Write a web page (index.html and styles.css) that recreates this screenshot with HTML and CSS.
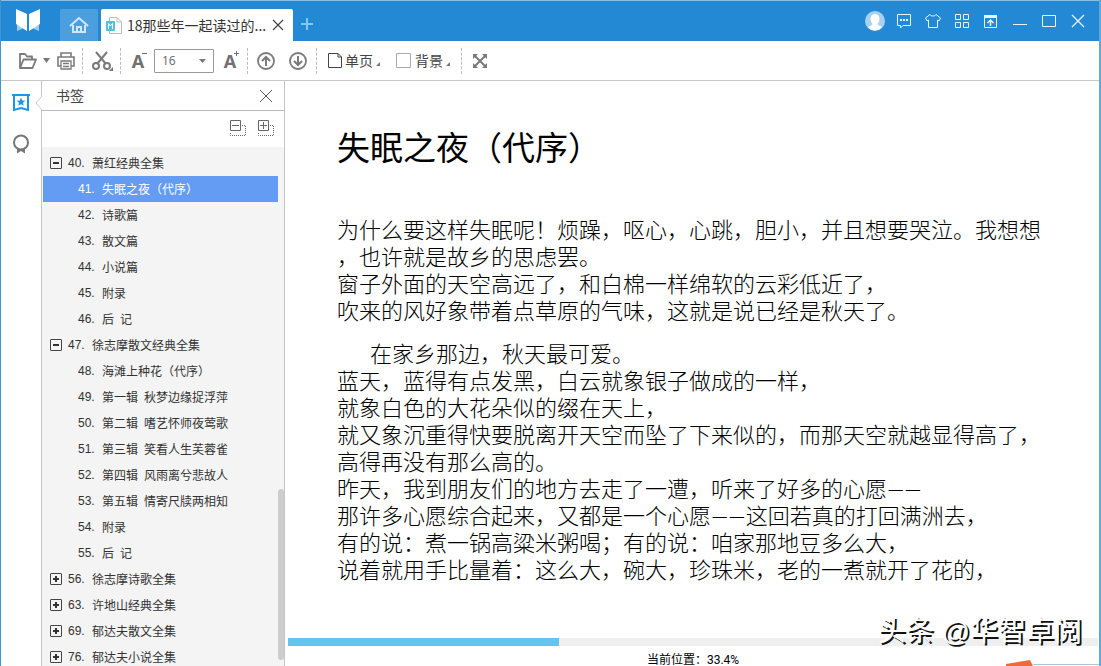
FILE: index.html
```html
<!DOCTYPE html>
<html lang="zh-CN">
<head>
<meta charset="utf-8">
<title>18那些年一起读过的...</title>
<link rel="stylesheet" href="styles.css">
</head>

<body>
<div class="window">

<!-- title bar -->
<header class="titlebar">
	<svg class="logo" width="24" height="24" viewBox="0 0 24 24">
		<path d="M1 13 V22 L10 18 Z M23 13 V22 L14 18 Z" fill="#9ccdf0"/>
		<path d="M0 0 L11 5 V22 L0 15 Z M24 0 L13 5 V22 L24 15 Z" fill="#fff"/>
	</svg>
	<button class="home" type="button" aria-label="主页">
		<svg width="20" height="18" viewBox="0 0 20 18" fill="none" stroke="#cfe8fb" stroke-width="2">
			<path d="M1 10 L10 2 L19 10"/>
			<path d="M4 9 V16 H16 V9"/>
			<path d="M8 16 V11 H12 V16"/>
		</svg>
	</button>
	<div class="tab">
		<svg width="16" height="17" viewBox="0 0 16 17">
			<path d="M3.500 .5 H11 L15.500 5 V16.500 H3.500 Z M11 .5 V5 H15.500" fill="#fff" stroke="#bbb"/>
			<rect x="0" y="4" width="9" height="10" rx="1" fill="#53c1dc"/>
			<path d="M2.500 12 V6.500 L4.500 9 L6.500 6.500 V12" fill="none" stroke="#fff"/>
		</svg>
		<span class="tabname">18那些年一起读过的...</span>
		<button class="tabclose" type="button" aria-label="关闭标签">
			<svg width="12" height="12" viewBox="0 0 12 12" stroke="#444" stroke-width="1.200"><path d="M1 1 L11 11 M11 1 L1 11"/></svg>
		</button>
	</div>
	<button class="newtab" type="button" aria-label="新标签">
		<svg width="12" height="12" viewBox="0 0 12 12" stroke="#86c6f2" stroke-width="2"><path d="M6 0 V12 M0 6 H12"/></svg>
	</button>
	<div class="controls">
		<button type="button" aria-label="用户">
			<svg width="20" height="20" viewBox="0 0 20 20">
				<circle cx="10" cy="10" r="10" fill="#a9d0ef"/>
				<path d="M10 3 C13 3 14.500 5 14.500 8 C14.500 10 13.500 12 12.500 13 C13 14.500 16 14.500 17 16.500 A9.500 9.500 0 0 1 3 16.500 C4 14.500 7 14.500 7.500 13 C6.500 12 5.500 10 5.500 8 C5.500 5 7 3 10 3 Z" fill="#fff"/>
			</svg>
		</button>
		<button type="button" aria-label="消息">
			<svg width="16" height="16" viewBox="0 0 16 16" fill="none" stroke="#e8f5ff">
				<path d="M1.500 1.500 H14.500 V12.500 H7 L4.500 15 V12.500 H1.500 Z"/>
				<path d="M4 7 H6 M7 7 H9 M10 7 H12" stroke-width="2"/>
			</svg>
		</button>
		<button type="button" aria-label="皮肤">
			<svg width="16" height="16" viewBox="0 0 16 16" fill="none" stroke="#e8f5ff">
				<path d="M5 1.500 C6 3.500 10 3.500 11 1.500 L15.500 5 L14 8 L12.500 7 V14.500 H3.500 V7 L2 8 L.5 5 Z"/>
			</svg>
		</button>
		<button type="button" aria-label="应用">
			<svg width="14" height="14" viewBox="0 0 14 14" fill="none" stroke="#e8f5ff">
				<path d="M.5 .5 H5.500 V5.500 H.5 Z M8.500 .5 H13.500 V5.500 H8.500 Z M.5 8.500 H5.500 V13.500 H.5 Z M8.500 8.500 H13.500 V13.500 H8.500 Z"/>
			</svg>
		</button>
		<button type="button" aria-label="置顶">
			<svg width="14" height="14" viewBox="0 0 14 14" fill="none" stroke="#e8f5ff">
				<path d="M.5 1.500 H12.500 V13.500 H.5 Z"/>
				<path d="M0 2.500 H13" stroke-width="3"/>
				<path d="M6.500 12 V6 M3.500 9 L6.500 6 L9.500 9" stroke-width="1.500"/>
			</svg>
		</button>
		<button type="button" aria-label="最小化">
			<svg width="14" height="14" viewBox="0 0 14 14" stroke="#e8f5ff"><path d="M0 10.500 H14"/></svg>
		</button>
		<button type="button" aria-label="最大化">
			<svg width="14" height="14" viewBox="0 0 14 14" fill="none" stroke="#e8f5ff"><path d="M.5 1.500 H13.500 V12.500 H.5 Z"/></svg>
		</button>
		<button type="button" aria-label="关闭">
			<svg width="14" height="14" viewBox="0 0 14 14" stroke="#e8f5ff" stroke-width="1.300"><path d="M1 1 L13 13 M13 1 L1 13"/></svg>
		</button>
	</div>
</header>

<!-- toolbar -->
<div class="toolbar">
	<button class="open" type="button" aria-label="打开">
		<svg width="20" height="18" viewBox="0 0 20 18" fill="none" stroke="#7a7a7a" stroke-width="1.800" stroke-linejoin="round">
			<path d="M2 16 V2 H7 L9 4.500 H14 V7"/>
			<path d="M2 16 L5.500 7.500 H18 L14.500 16 Z"/>
		</svg>
		<svg width="7" height="5" viewBox="0 0 7 5" fill="#777"><path d="M0 0 H7 L3.500 5 Z"/></svg>
	</button>
	<button class="print" type="button" aria-label="打印">
		<svg width="18" height="18" viewBox="0 0 18 18" fill="none" stroke="#7a7a7a" stroke-width="1.600">
			<path d="M4 5 V1 H14 V5"/>
			<path d="M4 14 H1 V5 H17 V14 H14"/>
			<path d="M4 9 H14 V17 H4 Z M6 11.500 H12 M6 14.500 H12" stroke-width="1.300"/>
		</svg>
	</button>
	<span class="sep"></span>
	<button class="cut" type="button" aria-label="剪切">
		<svg width="22" height="20" viewBox="0 0 22 20" fill="none" stroke="#7a7a7a" stroke-width="2">
			<path d="M4 1 L14 13 M15 1 L5 13"/>
			<circle cx="4" cy="15" r="3"/>
			<circle cx="15" cy="15" r="3"/>
			<path d="M21 16 V20 H17 Z" fill="#777" stroke="none"/>
		</svg>
	</button>
	<span class="sep"></span>
	<button class="size" type="button" aria-label="缩小字号">
		<span class="letter">A<svg class="sign" width="5" height="5" viewBox="0 0 5 5" stroke="#707070"><path d="M0 2.500 H5"/></svg></span>
	</button>
	<div class="fontsize">
		<select aria-label="字号"><option>16</option><option>18</option><option>20</option></select>
		<svg class="arrow" width="7" height="4" viewBox="0 0 7 4" fill="#777"><path d="M0 0 H7 L3.500 4 Z"/></svg>
	</div>
	<button class="size" type="button" aria-label="放大字号">
		<span class="letter">A<svg class="sign" width="5" height="5" viewBox="0 0 5 5" stroke="#707070"><path d="M0 2.500 H5 M2.500 0 V5"/></svg></span>
	</button>
	<span class="sep"></span>
	<button class="turn" type="button" aria-label="上一页">
		<svg width="18" height="18" viewBox="0 0 18 18" fill="none" stroke="#7a7a7a" stroke-width="1.800"><circle cx="9" cy="9" r="8"/><path d="M9 14 V5 M5 9 L9 5 L13 9" stroke-width="2"/></svg>
	</button>
	<button class="turn" type="button" aria-label="下一页">
		<svg width="18" height="18" viewBox="0 0 18 18" fill="none" stroke="#7a7a7a" stroke-width="1.800"><circle cx="9" cy="9" r="8"/><path d="M9 4 V13 M5 9 L9 13 L13 9" stroke-width="2"/></svg>
	</button>
	<span class="sep"></span>
	<button class="mode" type="button">
		<svg width="16" height="16" viewBox="0 0 16 16" fill="none" stroke="#444"><path d="M2.500 .5 H12 L15.500 4 V14.500 H2.500 Z M12 .5 V4 H15.500"/></svg>
		<span>单页</span>
		<svg class="corner" width="4" height="4" viewBox="0 0 4 4" fill="#777"><path d="M4 0 V4 H0 Z"/></svg>
	</button>
	<button class="mode" type="button">
		<svg width="16" height="16" viewBox="0 0 16 16" fill="none" stroke="#aaa"><path d="M.5 .5 H14.500 V14.500 H.5 Z"/></svg>
		<span>背景</span>
		<svg class="corner" width="4" height="4" viewBox="0 0 4 4" fill="#777"><path d="M4 0 V4 H0 Z"/></svg>
	</button>
	<span class="sep"></span>
	<button class="full" type="button" aria-label="全屏">
		<svg width="14" height="14" viewBox="0 0 14 14" fill="#7a7a7a" stroke="#7a7a7a" stroke-width="2"><path d="M2 2 L12 12 M12 2 L2 12"/><path d="M0 0 H5 L0 5 Z M14 0 V5 L9 0 Z M0 14 V9 L5 14 Z M14 14 H9 L14 9 Z" stroke="none"/></svg>
	</button>
</div>

<div class="main">
	<nav class="rail">
		<button type="button" aria-label="书签">
			<svg width="18" height="18" viewBox="0 0 18 18" fill="none" stroke="#1b96ea" stroke-width="2">
				<path d="M0 1 H18"/>
				<path d="M2 1 V16 L9 14 L16 16 V1"/>
				<path d="M9 3.500 L10.200 6.500 L13.300 6.700 L11 8.700 L11.700 11.800 L9 10.200 L6.300 11.800 L7 8.700 L4.700 6.700 L7.800 6.500 Z" fill="#1b96ea" stroke="none"/>
			</svg>
		</button>
		<button type="button" aria-label="批注">
			<svg width="18" height="20" viewBox="0 0 18 20" fill="none" stroke="#777" stroke-width="2">
				<circle cx="9" cy="8.500" r="7"/>
				<path d="M5 14 V19.500 L9 17 L13 19.500 V14 L9 16 Z" fill="#777" stroke="none"/>
			</svg>
		</button>
		<svg class="notch" width="7" height="14" viewBox="0 0 7 14" fill="#fff" stroke="#ccc"><path d="M7 0 L1 7 L7 14"/></svg>
	</nav>

	<!-- bookmarks -->
	<aside class="panel">
		<div class="panelhead">
			<span>书签</span>
			<button type="button" aria-label="关闭书签">
				<svg width="14" height="14" viewBox="0 0 14 14" stroke="#555"><path d="M1 1 L13 13 M13 1 L1 13"/></svg>
			</button>
		</div>
		<div class="paneltools">
			<button type="button" aria-label="全部收起">
				<svg width="16" height="16" viewBox="0 0 16 16" fill="none" stroke="#666"><path d="M.5 .5 H10.500 V10.500 H.5 Z M2 5.500 H9"/><path d="M12 5.500 H15.500 V15.500 H.5 V13" stroke-dasharray="1 1"/></svg>
			</button>
			<button type="button" aria-label="全部展开">
				<svg width="16" height="16" viewBox="0 0 16 16" fill="none" stroke="#666"><path d="M.5 .5 H10.500 V10.500 H.5 Z M2 5.500 H9 M5.500 2 V9"/><path d="M12 5.500 H15.500 V15.500 H.5 V13" stroke-dasharray="1 1"/></svg>
			</button>
		</div>
		<div class="tree">
			<ul>
				<li><div class="row"><button class="minus" type="button" aria-label="收起"></button><a href="#"><span class="num">40.</span>萧红经典全集</a></div>
					<ul>
						<li><a class="row active" href="#"><span class="num">41.</span>失眠之夜（代序）</a></li>
						<li><a class="row" href="#"><span class="num">42.</span>诗歌篇</a></li>
						<li><a class="row" href="#"><span class="num">43.</span>散文篇</a></li>
						<li><a class="row" href="#"><span class="num">44.</span>小说篇</a></li>
						<li><a class="row" href="#"><span class="num">45.</span>附录</a></li>
						<li><a class="row" href="#"><span class="num">46.</span>后&ensp;记</a></li>
					</ul>
				</li>
				<li><div class="row"><button class="minus" type="button" aria-label="收起"></button><a href="#"><span class="num">47.</span>徐志摩散文经典全集</a></div>
					<ul>
						<li><a class="row" href="#"><span class="num">48.</span>海滩上种花（代序）</a></li>
						<li><a class="row" href="#"><span class="num">49.</span>第一辑&ensp;秋梦边缘捉浮萍</a></li>
						<li><a class="row" href="#"><span class="num">50.</span>第二辑&ensp;嗜艺怀师夜莺歌</a></li>
						<li><a class="row" href="#"><span class="num">51.</span>第三辑&ensp;笑看人生芙蓉雀</a></li>
						<li><a class="row" href="#"><span class="num">52.</span>第四辑&ensp;风雨离兮悲故人</a></li>
						<li><a class="row" href="#"><span class="num">53.</span>第五辑&ensp;情寄尺牍两相知</a></li>
						<li><a class="row" href="#"><span class="num">54.</span>附录</a></li>
						<li><a class="row" href="#"><span class="num">55.</span>后&ensp;记</a></li>
					</ul>
				</li>
				<li><div class="row"><button class="plus" type="button" aria-label="展开"></button><a href="#"><span class="num">56.</span>徐志摩诗歌全集</a></div></li>
				<li><div class="row"><button class="plus" type="button" aria-label="展开"></button><a href="#"><span class="num">63.</span>许地山经典全集</a></div></li>
				<li><div class="row"><button class="plus" type="button" aria-label="展开"></button><a href="#"><span class="num">69.</span>郁达夫散文全集</a></div></li>
				<li><div class="row"><button class="plus" type="button" aria-label="展开"></button><a href="#"><span class="num">76.</span>郁达夫小说全集</a></div></li>
			</ul>
		</div>
		<div class="thumb"></div>
	</aside>

	<!-- reading area -->
	<section class="reader">
		<article>
			<h1>失眠之夜（代序）</h1>
			<p>为什么要这样失眠呢！烦躁，呕心，心跳，胆小，并且想要哭泣。我想想<br>
			，也许就是故乡的思虑罢。<br>
			窗子外面的天空高远了，和白棉一样绵软的云彩低近了，<br>
			吹来的风好象带着点草原的气味，这就是说已经是秋天了。</p>
			<p class="indent">在家乡那边，秋天最可爱。<br>
			蓝天，蓝得有点发黑，白云就象银子做成的一样，<br>
			就象白色的大花朵似的缀在天上，<br>
			就又象沉重得快要脱离开天空而坠了下来似的，而那天空就越显得高了，<br>
			高得再没有那么高的。<br>
			昨天，我到朋友们的地方去走了一遭，听来了好多的心愿——<br>
			那许多心愿综合起来，又都是一个心愿——这回若真的打回满洲去，<br>
			有的说：煮一锅高粱米粥喝；有的说：咱家那地豆多么大，<br>
			说着就用手比量着：这么大，碗大，珍珠米，老的一煮就开了花的，</p>
		</article>
		<footer>
			<div class="progress"><div class="bar" style="width:33.4%"></div></div>
			<div class="position">当前位置：<span>33.4%</span></div>
		</footer>
		<div class="watermark">头条 @华智卓阅</div>
		<svg class="ribbon" width="93" height="6" viewBox="0 0 93 6"><path d="M27 4.500 H93" stroke="#a9c9e0"/><path d="M0 4 L24 0 L27 6 H0 Z" fill="#ee6a3c"/></svg>
	</section>
</div>

</div>
</body>
</html>
```
FILE: styles.css
```css
* {
	box-sizing: border-box;
}
body {
	margin: 0;
	font-family: "Noto Sans CJK SC", sans-serif;
	font-size: 14px;
	color: #333;
	text-spacing-trim: space-all;
}
button {
	display: flex;
	align-items: center;
	justify-content: center;
	padding: 0;
	border: none;
	background: none;
	font: inherit;
	color: inherit;
	cursor: pointer;
}
svg {
	display: block;
	flex: none;
}
ul {
	margin: 0;
	padding: 0;
	list-style: none;
}
a {
	color: inherit;
	text-decoration: none;
}
.window {
	display: flex;
	flex-direction: column;
	height: 100vh;
	overflow: hidden;
	border-left: 1px solid #3f95d2;
	border-right: 2px solid #5fa9d9;
	background: #fff;
}

/* title bar */
.titlebar {
	display: flex;
	align-items: flex-end;
	flex: none;
	height: 41px;
	border-top: 1px solid #86bfe8;
	background: #2489d5;
}
.logo {
	margin: 0 20px 8px 15px;
}
.home {
	width: 38px;
	height: 32px;
	border-radius: 2px 2px 0 0;
	background: #4b9fde;
}
.tab {
	display: flex;
	align-items: center;
	width: 192px;
	height: 32px;
	margin-left: 3px;
	padding: 0 8px 0 5px;
	border-radius: 2px 2px 0 0;
	background: #fff;
}
.tabname {
	flex: 1;
	margin-left: 5px;
	white-space: nowrap;
}
.tabclose {
	width: 14px;
	height: 14px;
}
.newtab {
	width: 28px;
	height: 34px;
}
.controls {
	display: flex;
	margin: 0 7px 0 auto;
}
.controls button {
	width: 29px;
	height: 40px;
}

/* toolbar */
.toolbar {
	display: flex;
	align-items: center;
	flex: none;
	height: 40px;
	padding-left: 14px;
	border-bottom: 1px solid #c8c8c8;
}
.toolbar button {
	height: 28px;
}
.sep {
	height: 26px;
	margin: 0 2px;
	border-left: 1px dashed #bbb;
}
.open {
	gap: 5px;
	width: 37px;
}
.print {
	width: 28px;
}
.cut {
	width: 33px;
	padding-left: 2px;
}
.size {
	width: 30px;
}
.letter {
	position: relative;
	font: bold 18px/20px "Open Sans", sans-serif;
	color: #707070;
}
.sign {
	position: absolute;
	top: 0;
	right: -3px;
}
.fontsize {
	position: relative;
	margin: 0 1px;
}
.fontsize select {
	display: block;
	width: 60px;
	height: 24px;
	padding: 0 7px;
	border: 1px solid #999;
	border-radius: 1px;
	background: #fff;
	appearance: none;
	font: 12px "Open Sans", sans-serif;
	color: #666;
}
.arrow {
	position: absolute;
	top: 10px;
	right: 8px;
}
.turn {
	width: 32px;
}
.toolbar .mode {
	justify-content: flex-start;
	gap: 3px;
	width: 70px;
	padding-left: 7px;
	color: #444;
}
.mode span {
	padding-bottom: 2px;
}
.corner {
	margin-top: 7px;
}
.full {
	width: 31px;
}

.main {
	display: flex;
	flex: 1;
	min-height: 0;
}

/* left icons */
.rail {
	position: relative;
	width: 40px;
	padding-top: 1px;
}
.rail button {
	width: 40px;
	height: 41px;
}
.notch {
	position: absolute;
	top: 15px;
	right: -1px;
	z-index: 1;
}

/* bookmarks */
.panel {
	position: relative;
	display: flex;
	flex-direction: column;
	width: 244px;
	border-left: 1px solid #c4c4c4;
	border-right: 1px solid #c4c4c4;
}
.panelhead {
	display: flex;
	align-items: center;
	justify-content: space-between;
	flex: none;
	height: 30px;
	padding: 0 11px 0 14px;
	border-bottom: 1px solid #b8b8b8;
	color: #444;
}
.panelhead span {
	padding-bottom: 2px;
}
.paneltools {
	display: flex;
	align-items: center;
	justify-content: flex-end;
	flex: none;
	gap: 12px;
	height: 36px;
	padding: 0 10px 2px 0;
}
.tree {
	flex: 1;
	min-height: 0;
	padding: 3px 6px 0 1px;
	overflow: hidden;
	background: #f4f4f4;
	font-size: 12px;
	line-height: 26px;
}
.row {
	display: flex;
	align-items: center;
	height: 26px;
	padding-left: 7px;
	white-space: nowrap;
}
.row a {
	display: flex;
}
.tree ul ul .row {
	padding-left: 35px;
}
.num {
	width: 24px;
	font-family: "Liberation Sans", sans-serif;
}
.active {
	background: #649cf3;
	color: #fff;
}
.minus,
.plus {
	width: 12px;
	height: 12px;
	margin-right: 6px;
	border: 1px solid #444;
	border-radius: 1px;
	background: linear-gradient(#333, #333) center / 6px 2px no-repeat;
}
.plus {
	background: linear-gradient(#333, #333) center / 6px 2px no-repeat, linear-gradient(#333, #333) center / 2px 6px no-repeat;
}
.thumb {
	position: absolute;
	right: 0;
	bottom: 6px;
	width: 6px;
	height: 171px;
	border-radius: 3px;
	background: #cdcdcd;
}

/* reading area */
.reader {
	position: relative;
	display: flex;
	flex-direction: column;
	flex: 1;
	min-width: 0;
	color: #000;
}
article {
	flex: 1;
	min-height: 0;
	padding: 42px 0 0 52px;
	overflow: hidden;
	font-family: Lato, "Noto Sans CJK SC", sans-serif;
	font-size: 22px;
	font-weight: 300;
	line-height: 27px;
	white-space: nowrap;
}
h1 {
	margin: 0 0 45px;
	font-size: 33px;
	font-weight: 400;
	line-height: 48px;
}
p {
	margin: 0 0 16px;
}
.indent {
	text-indent: 33px;
}
footer {
	flex: none;
	padding: 0 1px 0 3px;
}
.progress {
	height: 8px;
	background: #efefef;
}
.bar {
	height: 8px;
	background: #62c5ef;
}
.position {
	height: 20px;
	padding-top: 5px;
	font-size: 12px;
	line-height: 15px;
	text-align: center;
}
.position span {
	font-family: Roboto, sans-serif;
}
.watermark {
	position: absolute;
	right: 17px;
	bottom: 14px;
	font-family: "Liberation Sans", "Noto Sans CJK SC", sans-serif;
	font-size: 28px;
	line-height: 40px;
	color: #fff;
	text-shadow: 2px 2px 0 #111;
}
.ribbon {
	position: absolute;
	right: 0;
	bottom: 0;
}
```
